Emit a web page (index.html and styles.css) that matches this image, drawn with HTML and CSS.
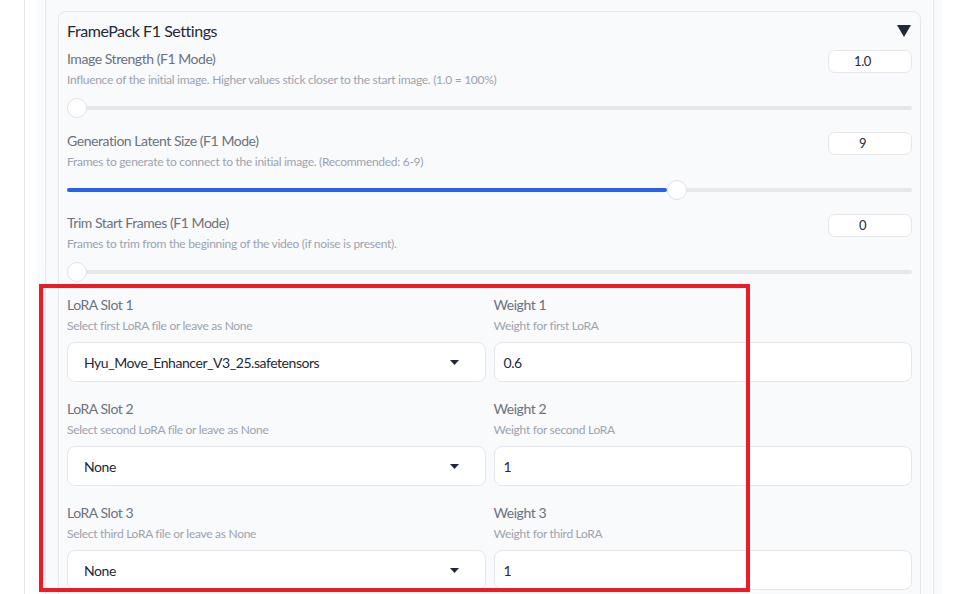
FILE: index.html
```html
<!DOCTYPE html>
<html>
<head>
<meta charset="utf-8">
<link rel="stylesheet" href="styles.css">
</head>
<body>
<div class="outer">
  <div class="panel">
    <div class="block">
      <div class="card">
        <div class="title-row">
          <span class="title">FramePack F1 Settings</span>
          <svg class="tri" width="14" height="12" viewBox="0 0 14 12"><polygon points="0,0 14,0 7,12" fill="#1f2937"/></svg>
        </div>

        <div class="section">
          <div class="head">
            <div class="texts">
              <div class="label">Image Strength (F1 Mode)</div>
              <div class="info">Influence of the initial image. Higher values stick closer to the start image. (1.0 = 100%)</div>
            </div>
            <div class="num">1.0</div>
          </div>
          <div class="slider">
            <div class="track"></div>
            <div class="fill" style="width:0px"></div>
            <div class="thumb" style="left:0px"></div>
          </div>
        </div>

        <div class="section">
          <div class="head">
            <div class="texts">
              <div class="label">Generation Latent Size (F1 Mode)</div>
              <div class="info">Frames to generate to connect to the initial image. (Recommended: 6-9)</div>
            </div>
            <div class="num">9</div>
          </div>
          <div class="slider">
            <div class="track"></div>
            <div class="fill" style="width:600px"></div>
            <div class="thumb" style="left:600px"></div>
          </div>
        </div>

        <div class="section">
          <div class="head">
            <div class="texts">
              <div class="label">Trim Start Frames (F1 Mode)</div>
              <div class="info">Frames to trim from the beginning of the video (if noise is present).</div>
            </div>
            <div class="num">0</div>
          </div>
          <div class="slider">
            <div class="track"></div>
            <div class="fill" style="width:0px"></div>
            <div class="thumb" style="left:0px"></div>
          </div>
        </div>

        <div class="lora-grid">
          <div class="field">
            <div class="label">LoRA Slot 1</div>
            <div class="info">Select first LoRA file or leave as None</div>
            <div class="select"><span>Hyu_Move_Enhancer_V3_25.safetensors</span><svg class="caret" width="9" height="5" viewBox="0 0 9 5"><polygon points="0,0 9,0 4.5,5" fill="#1f2937"/></svg></div>
          </div>
          <div class="field">
            <div class="label">Weight 1</div>
            <div class="info">Weight for first LoRA</div>
            <div class="textbox">0.6</div>
          </div>
          <div class="field">
            <div class="label">LoRA Slot 2</div>
            <div class="info">Select second LoRA file or leave as None</div>
            <div class="select"><span>None</span><svg class="caret" width="9" height="5" viewBox="0 0 9 5"><polygon points="0,0 9,0 4.5,5" fill="#1f2937"/></svg></div>
          </div>
          <div class="field">
            <div class="label">Weight 2</div>
            <div class="info">Weight for second LoRA</div>
            <div class="textbox">1</div>
          </div>
          <div class="field">
            <div class="label">LoRA Slot 3</div>
            <div class="info">Select third LoRA file or leave as None</div>
            <div class="select"><span>None</span><svg class="caret" width="9" height="5" viewBox="0 0 9 5"><polygon points="0,0 9,0 4.5,5" fill="#1f2937"/></svg></div>
          </div>
          <div class="field">
            <div class="label">Weight 3</div>
            <div class="info">Weight for third LoRA</div>
            <div class="textbox">1</div>
          </div>
        </div>
      </div>
    </div>
  </div>
</div>
<div class="highlight"></div>
</body>
</html>
```
FILE: styles.css
```css
html, body {
  margin: 0;
  padding: 0;
  background: #ffffff;
  height: 594px;
  overflow: hidden;
}
body {
  font-family: Lato, "Noto Sans", sans-serif;
  letter-spacing: -0.028em;
  color: #1f2937;
  position: relative;
}
.outer {
  margin-left: 24px;
  border-left: 1px solid #e5e7eb;
  padding-left: 12px;
  width: 905px;
  height: 594px;
}
.panel {
  background: #f9fafb;
  width: 905px;
  height: 594px;
  padding: 0 8px;
  box-sizing: border-box;
}
.block {
  border-left: 1px solid #e5e7eb;
  border-right: 1px solid #e5e7eb;
  height: 594px;
  overflow: hidden;
  padding: 11px 12px 0 12px;
  box-sizing: border-box;
  background: #f9fafb;
}
.card {
  border: 1px solid #e5e7eb;
  border-radius: 8px;
  background: #f9fafb;
  padding: 8px 8px 0 8px;
  height: 640px;
}
.title-row {
  display: flex;
  justify-content: space-between;
  align-items: center;
  height: 22px;
  margin-bottom: 8px;
}
.title {
  font-size: 16px;
  line-height: 22px;
  color: #1f2937;
}
.tri {
  margin-right: 1px;
  display: block;
}
.section {
  margin-bottom: 14px;
}
.head {
  display: flex;
  justify-content: space-between;
  align-items: flex-start;
}
.label {
  font-size: 14px;
  line-height: 18px;
  color: #6b7280;
  margin-bottom: 4px;
}
.info {
  font-size: 12px;
  line-height: 16px;
  letter-spacing: -0.024em;
  color: #9ca3af;
}
.num {
  width: 84px;
  height: 23px;
  box-sizing: border-box;
  border: 1px solid #e5e7eb;
  border-radius: 7px;
  background: #ffffff;
  text-align: center;
  padding-right: 15px;
  font-size: 13px;
  line-height: 21px;
  color: #1f2937;
}
.slider {
  position: relative;
  height: 20px;
  margin-top: 10px;
}
.track {
  position: absolute;
  left: 0;
  right: 0;
  top: 8px;
  height: 4px;
  border-radius: 2px;
  background: #e5e7eb;
}
.fill {
  position: absolute;
  left: 0;
  top: 8px;
  height: 4px;
  border-radius: 2px;
  background: #2563eb;
}
.thumb {
  position: absolute;
  top: 0;
  width: 20px;
  height: 20px;
  box-sizing: border-box;
  border-radius: 50%;
  background: #ffffff;
  border: 1px solid #e0e2e6;
}
.lora-grid {
  display: grid;
  grid-template-columns: 1fr 1fr;
  column-gap: 8px;
  row-gap: 18px;
}
.field .info {
  margin-bottom: 8px;
}
.select, .textbox {
  height: 40px;
  box-sizing: border-box;
  border: 1px solid #e5e7eb;
  border-radius: 8px;
  background: #ffffff;
  font-size: 14px;
  color: #1f2937;
  display: flex;
  align-items: center;
}
.select {
  padding: 0 26px 0 16px;
  justify-content: space-between;
}
.textbox {
  padding: 0 9px;
}
.caret {
  display: block;
}
.highlight {
  position: absolute;
  left: 39px;
  top: 284px;
  width: 711px;
  height: 308px;
  box-sizing: border-box;
  border: 4px solid #ed1c24;
}
```
